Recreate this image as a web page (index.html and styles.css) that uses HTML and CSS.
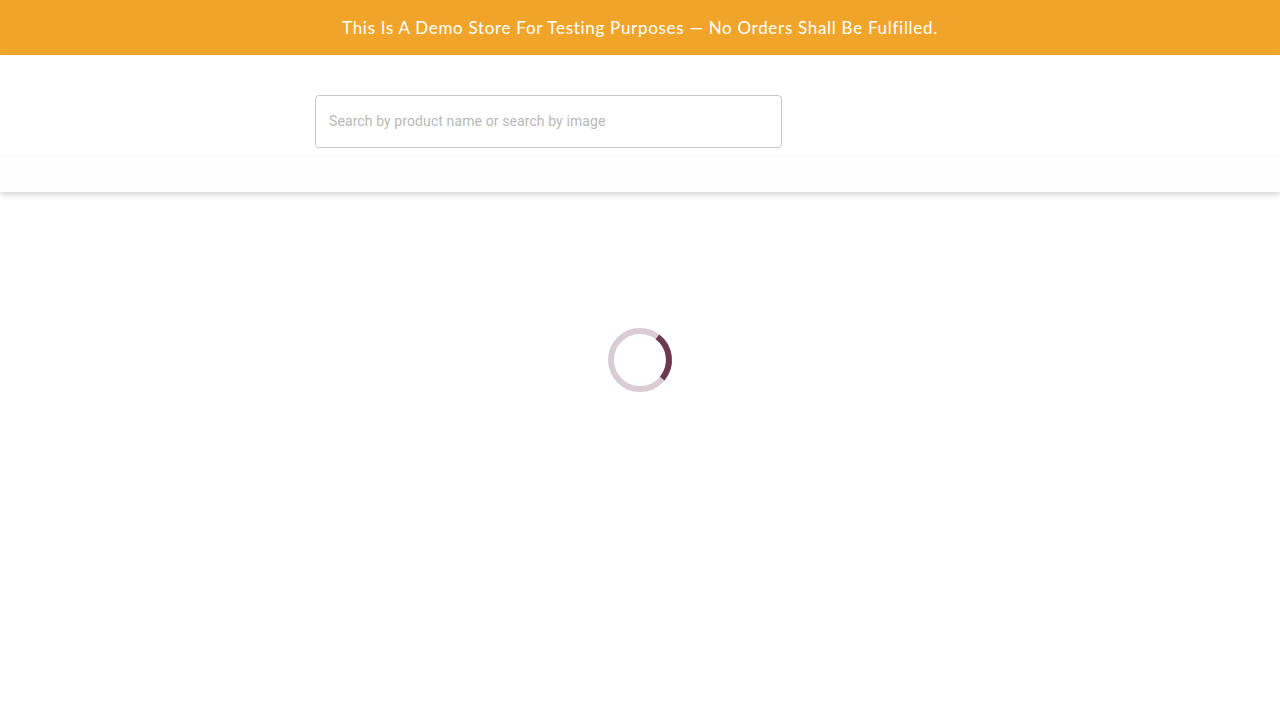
FILE: index.html
```html
<!DOCTYPE html>
<html>
<head>
<meta charset="utf-8">
<link rel="stylesheet" href="styles.css">
</head>
<body>
<div class="banner">This Is A Demo Store For Testing Purposes — No Orders Shall Be Fulfilled.</div>
<header class="header">
  <div class="header-top">
    <div class="search">
      <input class="search-input" type="text" placeholder="Search by product name or search by image">
    </div>
  </div>
  <div class="header-nav"></div>
</header>
<main class="main">
  <svg class="spinner" width="68" height="68" viewBox="0 0 68 68">
    <circle cx="34" cy="34" r="29" fill="none" stroke="#d9ccd2" stroke-width="6"/>
    <path d="M 51.45 10.84 A 29 29 0 0 1 56.2 52.6" fill="none" stroke="#6b3a4e" stroke-width="6"/>
  </svg>
</main>
</body>
</html>
```
FILE: styles.css
```css
html, body { margin: 0; padding: 0; background: #fff; }
body { font-family: "Open Sans", sans-serif; }
.banner {
  height: 55px;
  background: #f0a52a;
  color: #fff;
  display: flex;
  align-items: center;
  justify-content: center;
  font-family: "Lato", sans-serif;
  font-size: 17px;
  letter-spacing: 0.7px;
}
.header {
  background: #fff;
  box-shadow: 0 3px 6px rgba(0,0,0,0.16);
  position: relative;
}
.header-top {
  height: 101px;
  display: flex;
  align-items: flex-start;
  padding-left: 315px;
  box-sizing: border-box;
  padding-top: 40px;
  border-bottom: 1px solid #fbfbfb;
}
.search { width: 467px; }
.search-input {
  width: 100%;
  height: 53px;
  box-sizing: border-box;
  border: 1px solid #c8c8c8;
  border-radius: 4px;
  padding: 0 13px 2px;
  font-family: "Roboto", sans-serif;
  font-size: 14px;
  letter-spacing: 0.1px;
  color: #333;
  outline: none;
}
.search-input::placeholder { color: #b8b8b8; }
.header-nav { height: 36px; background: #fefefe; }
.main {
  height: 528px;
  display: flex;
  justify-content: center;
  padding-top: 134px;
  box-sizing: border-box;
}
.spinner { display: block; }
```
